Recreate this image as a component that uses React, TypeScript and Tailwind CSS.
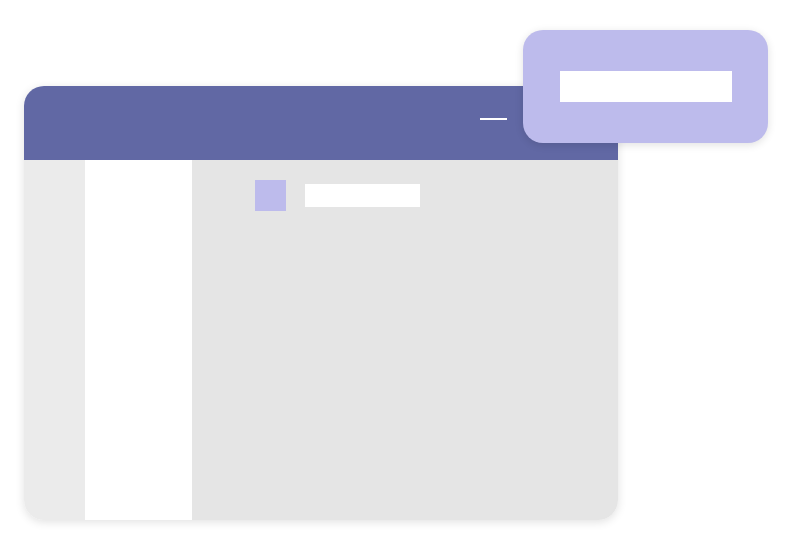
export default function App() {
  return (
    <div className="relative h-[540px] w-[800px] overflow-hidden bg-white">
      {/* app window */}
      <div className="ml-[24px] mt-[86px] flex h-[434px] w-[594px] flex-col overflow-hidden rounded-[20px] shadow-[0_2px_10px_rgba(0,0,0,0.12)]">
        <div className="flex h-[74px] shrink-0 items-start justify-end bg-[#6168a4] pr-[111px] pt-[32px]">
          <div className="h-[2px] w-[27px] bg-white" />
        </div>
        <div className="flex flex-1">
          <div className="w-[61px] bg-[#ebebeb]" />
          <div className="w-[107px] bg-white" />
          <div className="flex-1 bg-[#e5e5e5] pl-[63px] pt-[20px]">
            <div className="flex items-center gap-[19px]">
              <div className="h-[31px] w-[31px] bg-[#bdbbec]" />
              <div className="h-[23px] w-[115px] bg-white" />
            </div>
          </div>
        </div>
      </div>

      {/* floating popup */}
      <div className="absolute left-[523px] top-[30px] flex h-[113px] w-[245px] items-start rounded-[20px] bg-[#bdbbec] pl-[37px] pt-[41px] shadow-[0_2px_8px_rgba(0,0,0,0.12)]">
        <div className="h-[31px] w-[172px] bg-white" />
      </div>
    </div>
  );
}
